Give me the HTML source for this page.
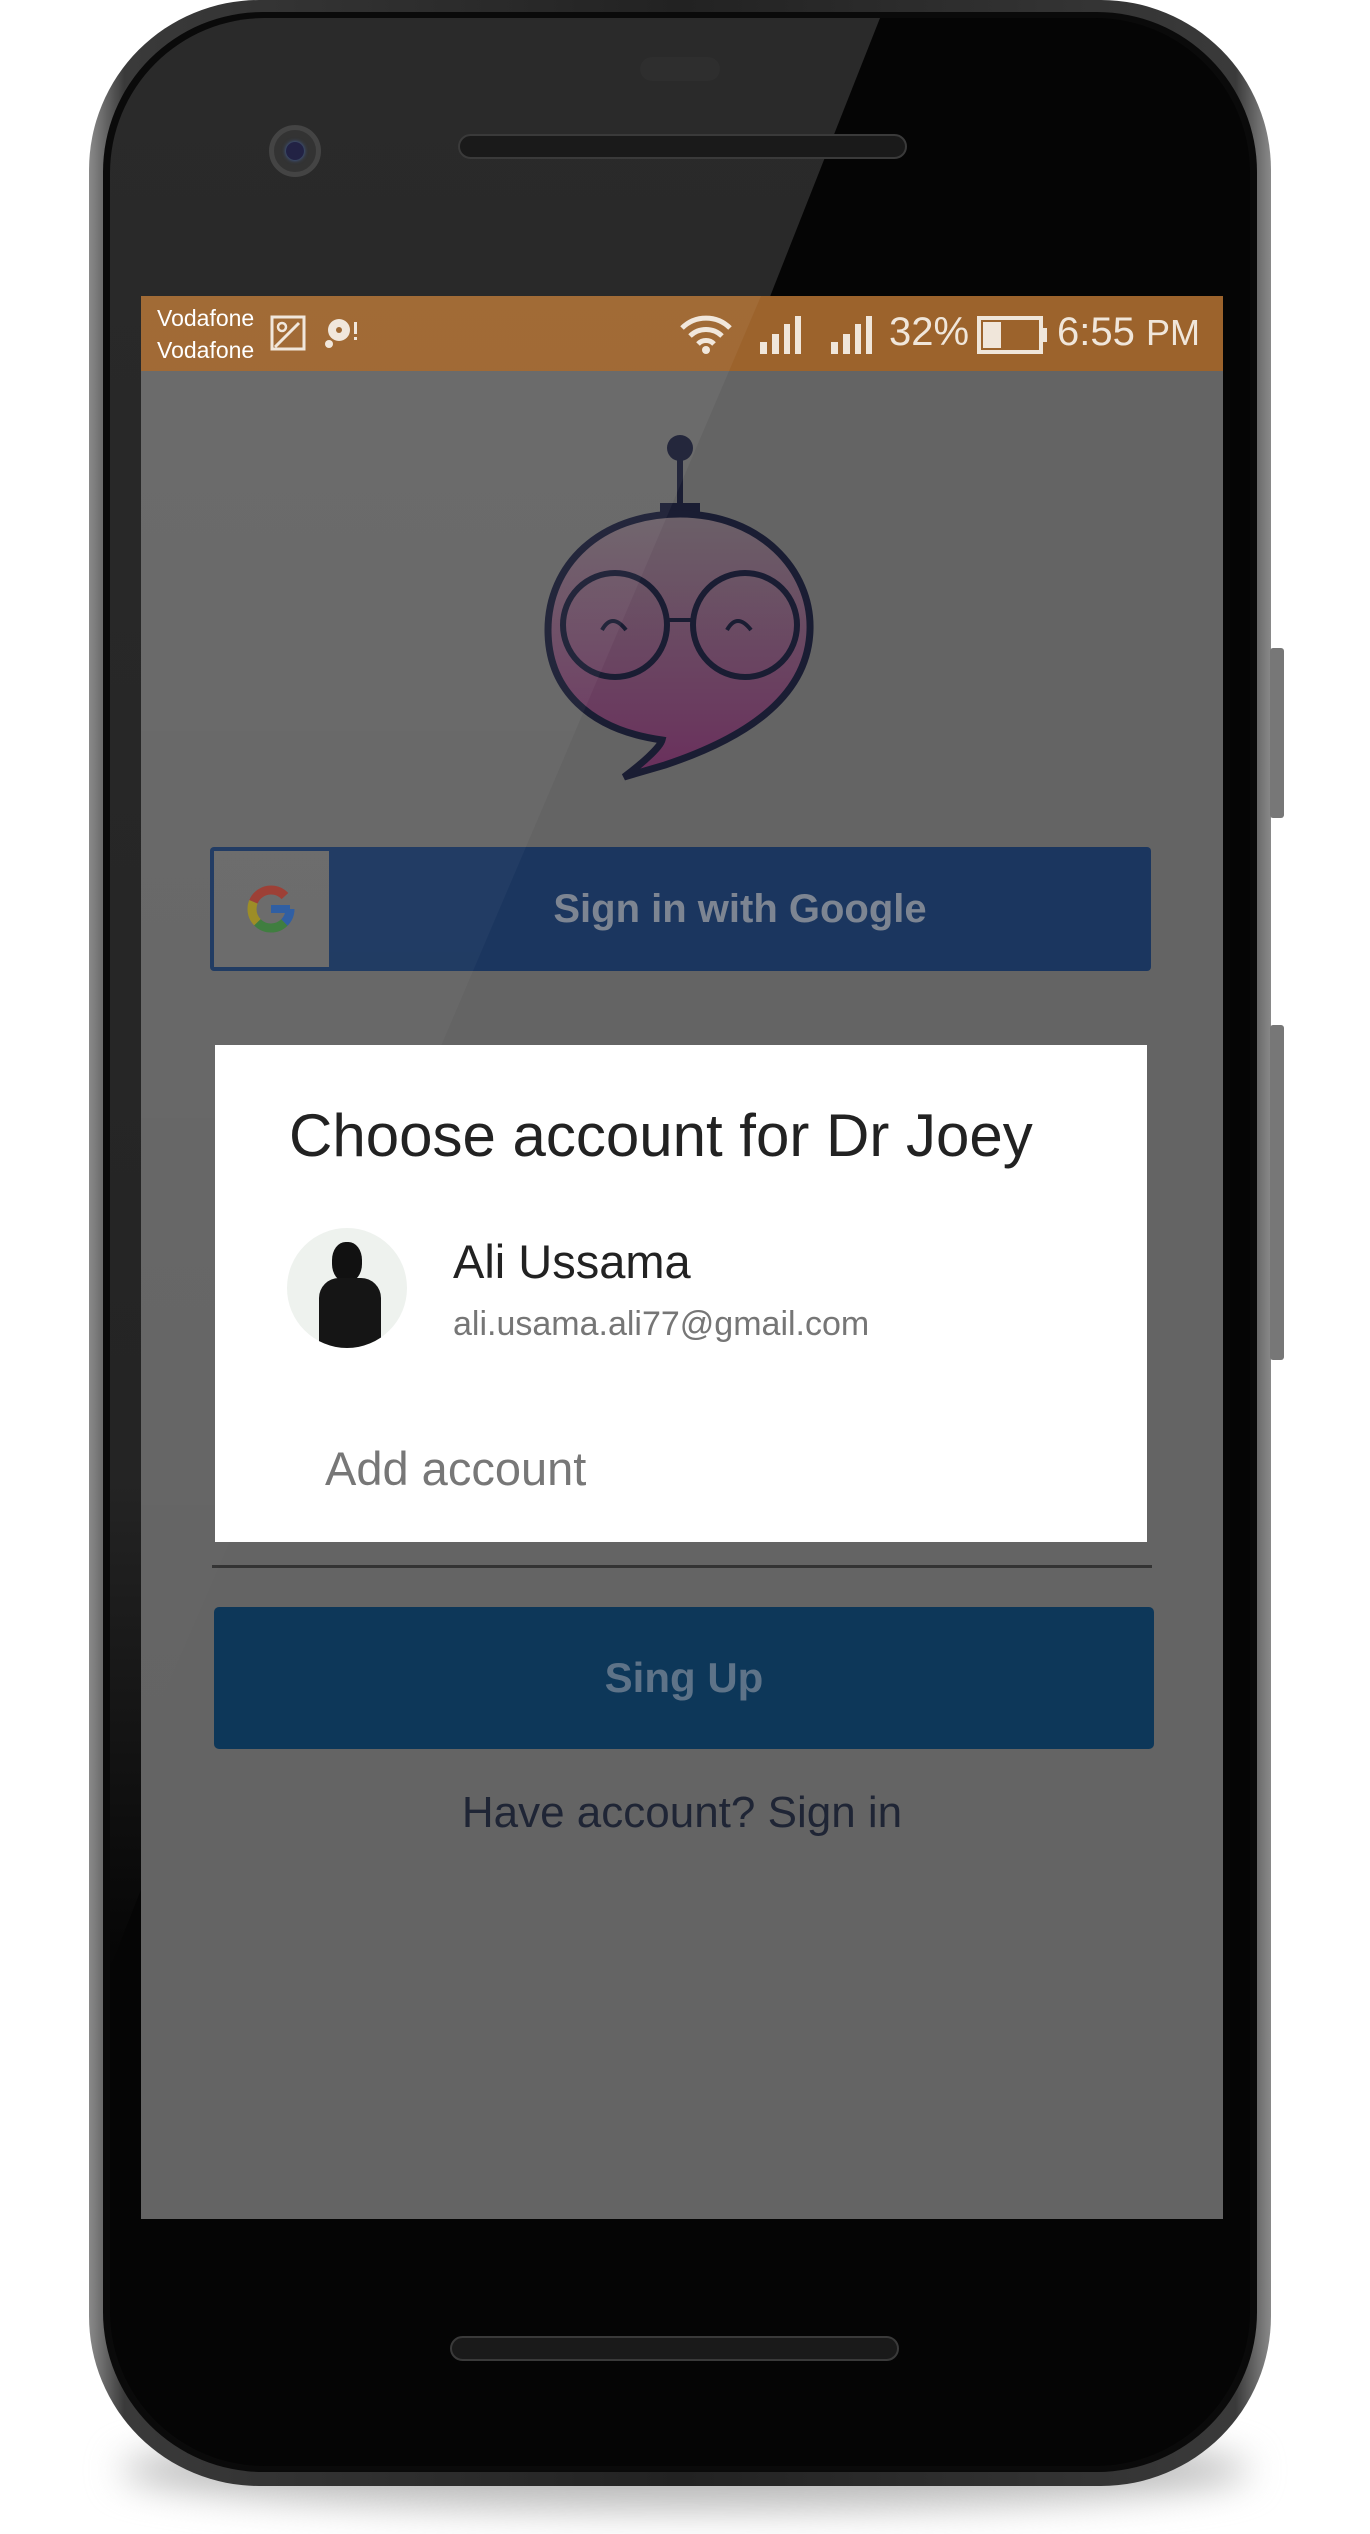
<!DOCTYPE html>
<html><head><meta charset="utf-8"><style>
*{margin:0;padding:0;box-sizing:border-box}
body{width:1370px;height:2534px;background:#fff;position:relative;overflow:hidden;font-family:"Liberation Sans",sans-serif}
.abs{position:absolute}
</style></head><body>
<div class="abs" style="left:120px;top:2430px;width:1130px;height:80px;border-radius:50%;background:#bbb;filter:blur(18px)"></div>
<div class="abs" style="left:89px;top:0;width:1182px;height:2486px;border-radius:170px;background:linear-gradient(90deg,#8a8a8a,#3a3a3a 3%,#222 50%,#3a3a3a 97%,#8a8a8a)"></div>
<div class="abs" style="left:103px;top:12px;width:1154px;height:2460px;border-radius:160px;background:#0a0a0a"></div>
<div class="abs" style="left:110px;top:18px;width:1140px;height:2448px;border-radius:155px;background:#050505;overflow:hidden">
  <svg class="abs" style="left:0;top:0" width="1140" height="2448"><defs><linearGradient id="gl" x1="0" y1="0" x2="0" y2="1"><stop offset="0" stop-color="#2a2a2a"/><stop offset="0.75" stop-color="#242424"/><stop offset="1" stop-color="#050505"/></linearGradient></defs><polygon points="0,0 770,0 0,1950" fill="url(#gl)"/></svg>
</div>
<div class="abs" style="left:1270px;top:648px;width:14px;height:170px;background:#777;border-radius:3px"></div>
<div class="abs" style="left:1270px;top:1025px;width:14px;height:335px;background:#777;border-radius:3px"></div>
<div class="abs" style="left:640px;top:57px;width:80px;height:24px;border-radius:12px;background:#2e2e2e"></div>
<div class="abs" style="left:458px;top:134px;width:449px;height:25px;border-radius:13px;background:#1a1a1a;border:2px solid #3a3a3a"></div>
<div class="abs" style="left:269px;top:125px;width:52px;height:52px;border-radius:50%;background:#333;border:5px solid #444"><div class="abs" style="left:12px;top:12px;width:18px;height:18px;border-radius:50%;background:#224;box-shadow:0 0 4px #46a"></div></div>
<div class="abs" style="left:450px;top:2336px;width:449px;height:25px;border-radius:13px;background:#1a1a1a;border:2px solid #3a3a3a"></div>
<div class="abs" style="left:141px;top:296px;width:1082px;height:1923px;background:#646464;overflow:hidden">
  <div class="abs" style="left:0;top:0;width:1082px;height:75px;background:#9c632c"></div>
  <div class="abs" style="left:16px;top:6px;color:#fff;font-size:23px;line-height:32px">Vodafone<br>Vodafone</div>
  <svg class="abs" style="left:128px;top:18px" width="40" height="40"><rect x="3" y="3" width="32" height="32" fill="none" stroke="#f0e6da" stroke-width="3"/><circle cx="13" cy="13" r="4" fill="none" stroke="#f0e6da" stroke-width="2.5"/><path d="M6 33 L30 9" stroke="#f0e6da" stroke-width="3"/></svg>
  <svg class="abs" style="left:182px;top:20px" width="40" height="36"><circle cx="16" cy="14" r="11" fill="#f0e6da"/><circle cx="16" cy="14" r="3" fill="#9c632c"/><circle cx="6" cy="28" r="4" fill="#f0e6da"/><rect x="31" y="6" width="3" height="12" fill="#f0e6da"/><rect x="31" y="21" width="3" height="3" fill="#f0e6da"/></svg>
  <svg class="abs" style="left:538px;top:16px" width="54" height="44"><path d="M3 16 A34 34 0 0 1 51 16" fill="none" stroke="#f0e6da" stroke-width="5"/><path d="M11 24 A23 23 0 0 1 43 24" fill="none" stroke="#f0e6da" stroke-width="5"/><path d="M19 32 A11 11 0 0 1 35 32" fill="none" stroke="#f0e6da" stroke-width="5"/><circle cx="27" cy="38" r="4" fill="#f0e6da"/></svg>
  <svg class="abs" style="left:617px;top:18px" width="50" height="42"><rect x="2" y="28" width="7" height="12" fill="#f0e6da"/><rect x="14" y="20" width="7" height="20" fill="#f0e6da"/><rect x="26" y="10" width="6" height="30" fill="#f0e6da"/><rect x="37" y="2" width="6" height="38" fill="#f0e6da"/></svg>
  <svg class="abs" style="left:688px;top:18px" width="50" height="42"><rect x="2" y="28" width="7" height="12" fill="#f0e6da"/><rect x="14" y="20" width="7" height="20" fill="#f0e6da"/><rect x="26" y="10" width="6" height="30" fill="#f0e6da"/><rect x="37" y="2" width="6" height="38" fill="#f0e6da"/></svg>
  <div class="abs" style="left:748px;top:14px;color:#f0e6da;font-size:40px">32%</div>
  <svg class="abs" style="left:836px;top:20px" width="72" height="38"><rect x="2" y="2" width="62" height="34" fill="none" stroke="#f0e6da" stroke-width="4"/><rect x="6" y="6" width="18" height="26" fill="#f0e6da"/><rect x="65" y="12" width="5" height="14" fill="#f0e6da"/></svg>
  <div class="abs" style="left:916px;top:14px;color:#f0e6da;font-size:40px">6:55 <span style="font-size:36px">PM</span></div>
  <svg class="abs" style="left:379px;top:124px" width="320" height="380" viewBox="520 420 320 380">
    <defs><linearGradient id="g" x1="0" y1="0" x2="0" y2="1"><stop offset="0" stop-color="#6b6068"/><stop offset="1" stop-color="#6a2f5c"/></linearGradient></defs>
    <circle cx="680" cy="448" r="13" fill="#1a1d33"/>
    <rect x="677" y="450" width="6" height="56" fill="#1a1d33"/>
    <rect x="660" y="503" width="40" height="13" fill="#1a1d33"/>
    <path d="M680 514 C760 514 812 570 810 630 C808 700 740 740 665 765 L624 777 C640 765 660 748 662 740 C590 730 548 690 548 630 C548 565 600 514 680 514 Z" fill="url(#g)" stroke="#1a1d33" stroke-width="7"/>
    <circle cx="615" cy="625" r="52" fill="none" stroke="#1a1d33" stroke-width="6"/>
    <circle cx="745" cy="625" r="52" fill="none" stroke="#1a1d33" stroke-width="6"/>
    <path d="M667 620 L693 620" stroke="#1a1d33" stroke-width="4"/>
    <path d="M602 630 Q612 612 626 630" fill="none" stroke="#1a1d33" stroke-width="4"/>
    <path d="M727 630 Q737 612 751 630" fill="none" stroke="#1a1d33" stroke-width="4"/>
  </svg>
  <div class="abs" style="left:69px;top:551px;width:941px;height:124px;background:#1b365f;border-radius:4px"></div>
  <div class="abs" style="left:73px;top:555px;width:115px;height:116px;background:#686868"></div>
  <svg class="abs" style="left:102px;top:585px" width="56" height="56" viewBox="0 0 56 56">
    <circle cx="28" cy="28" r="19" fill="none" stroke="#2a5aa0" stroke-width="9" stroke-dasharray="15 200"/>
    <circle cx="28" cy="28" r="19" fill="none" stroke="#3a7a3a" stroke-width="9" stroke-dasharray="0 15 30 200"/>
    <circle cx="28" cy="28" r="19" fill="none" stroke="#9a8a20" stroke-width="9" stroke-dasharray="0 45 22 200"/>
    <circle cx="28" cy="28" r="19" fill="none" stroke="#9a3a30" stroke-width="9" stroke-dasharray="0 67 38 200"/>
    <rect x="28" y="24" width="19" height="8" fill="#2a5aa0"/>
  </svg>
  <div class="abs" style="left:188px;top:551px;width:822px;height:124px;line-height:124px;text-align:center;color:#7d8592;font-size:40px;font-weight:bold">Sign in with Google</div>
  <div class="abs" style="left:71px;top:1269px;width:940px;height:3px;background:#333"></div>
  <div class="abs" style="left:73px;top:1311px;width:940px;height:142px;background:#0d3759;border-radius:5px;line-height:142px;text-align:center;color:#5e7388;font-size:42px;font-weight:bold">Sing Up</div>
  <div class="abs" style="left:0;top:1492px;width:1082px;text-align:center;color:#1f2535;font-size:44px">Have account? Sign in</div>
  <svg class="abs" style="left:0;top:0" width="1082" height="1923"><defs><linearGradient id="gl2" x1="0" y1="0" x2="0" y2="1"><stop offset="0" stop-color="#fff" stop-opacity="0.05"/><stop offset="1" stop-color="#fff" stop-opacity="0"/></linearGradient></defs><polygon points="0,0 620,0 -20,1500" fill="url(#gl2)"/></svg>
  <div class="abs" style="left:74px;top:749px;width:932px;height:497px;background:#fff">
    <div class="abs" style="left:74px;top:56px;font-size:60px;color:#222;white-space:nowrap">Choose account for Dr Joey</div>
    <div class="abs" style="left:72px;top:183px;width:120px;height:120px;border-radius:50%;background:#eef2ee;overflow:hidden">
      <div class="abs" style="left:45px;top:14px;width:30px;height:40px;border-radius:45%;background:#111"></div>
      <div class="abs" style="left:32px;top:50px;width:62px;height:80px;border-radius:20px 20px 0 0;background:#151515"></div>
    </div>
    <div class="abs" style="left:238px;top:189px;font-size:47px;color:#222">Ali Ussama</div>
    <div class="abs" style="left:238px;top:260px;font-size:34px;color:#767676">ali.usama.ali77@gmail.com</div>
    <div class="abs" style="left:110px;top:396px;font-size:47px;color:#777">Add account</div>
  </div>
</div>
</body></html>
